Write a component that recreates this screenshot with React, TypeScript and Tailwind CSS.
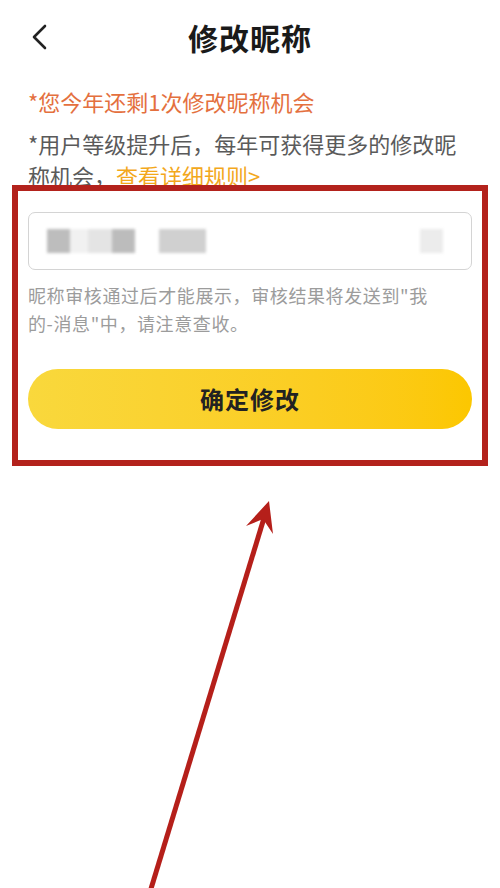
import React from 'react';

const blurBlocks = [
  { w: 'w-[23px]', c: 'bg-[#bdbdbd]' },
  { w: 'w-[18px]', c: 'bg-[#f1f1f1]' },
  { w: 'w-[24px]', c: 'bg-[#e4e4e4]' },
  { w: 'w-[23px]', c: 'bg-[#bcbcbc]' },
];

const App: React.FC = () => {
  return (
    <div className="relative w-[500px] h-[888px] bg-white overflow-hidden font-['Noto_Sans_CJK_SC',sans-serif]">
      {/* Header */}
      <div className="grid grid-cols-[1fr_auto_1fr] items-center h-[74px] px-[30px]">
        <svg width="18" height="26" viewBox="0 0 18 26" fill="none" className="text-[#222]">
          <path d="M15 2 L4 13 L15 24" stroke="currentColor" strokeWidth="2.6" strokeLinecap="round" strokeLinejoin="round" />
        </svg>
        <h1 className="text-[30px] font-bold text-[#1a1a1a] tracking-[1px] leading-none">修改昵称</h1>
        <div />
      </div>

      {/* Notes */}
      <div className="px-[28px] mt-[11px]">
        <p className="text-[22px] leading-[32px] text-[#e4703e]">*您今年还剩1次修改昵称机会</p>
        <p className="mt-[10px] text-[22px] leading-[32px] text-[#5a5a5a]">
          *用户等级提升后，每年可获得更多的修改昵
          <br />
          称机会，<span className="text-[#f3a81c] underline underline-offset-4">查看详细规则&gt;</span>
        </p>
      </div>

      {/* Highlighted form */}
      <div className="relative mx-[12px] mt-[-6px] border-[6px] border-[#b3221c] px-[10px] pt-[21px] pb-[31px]">
        <div className="h-[58px] rounded-[7px] border border-[#d4d4d4] flex items-center px-[18px]">
          <div className="flex items-center blur-[1.5px]">
            {blurBlocks.map((b, i) => (
              <div key={i} className={`h-[24px] ${b.w} ${b.c}`} />
            ))}
            <div className="h-[24px] w-[24px] bg-white" />
            <div className="h-[24px] w-[47px] bg-[#d0d0d0]" />
          </div>
          <div className="ml-auto mr-[10px] h-[24px] w-[23px] bg-[#ececec] blur-[1.5px]" />
        </div>
        <p className="mt-[11px] text-[18px] leading-[28px] tracking-[0.6px] text-[#9c9c9c]">
          昵称审核通过后才能展示，审核结果将发送到"我
          <br />
          的-消息"中，请注意查收。
        </p>
        <button className="mt-[32px] w-full h-[60px] rounded-full bg-gradient-to-r from-[#f9d83c] to-[#fcc700] text-[24px] font-bold text-[#222] tracking-[1px]">
          确定修改
        </button>
      </div>

      {/* Annotation arrow */}
      <svg className="absolute inset-0 pointer-events-none" width="500" height="888" viewBox="0 0 500 888">
        <line x1="150" y1="892" x2="264" y2="518" stroke="#b51f1a" strokeWidth="5" />
        <polygon points="269,501 246,526 263,519 273,534" fill="#b51f1a" />
      </svg>
    </div>
  );
};

export default App;
